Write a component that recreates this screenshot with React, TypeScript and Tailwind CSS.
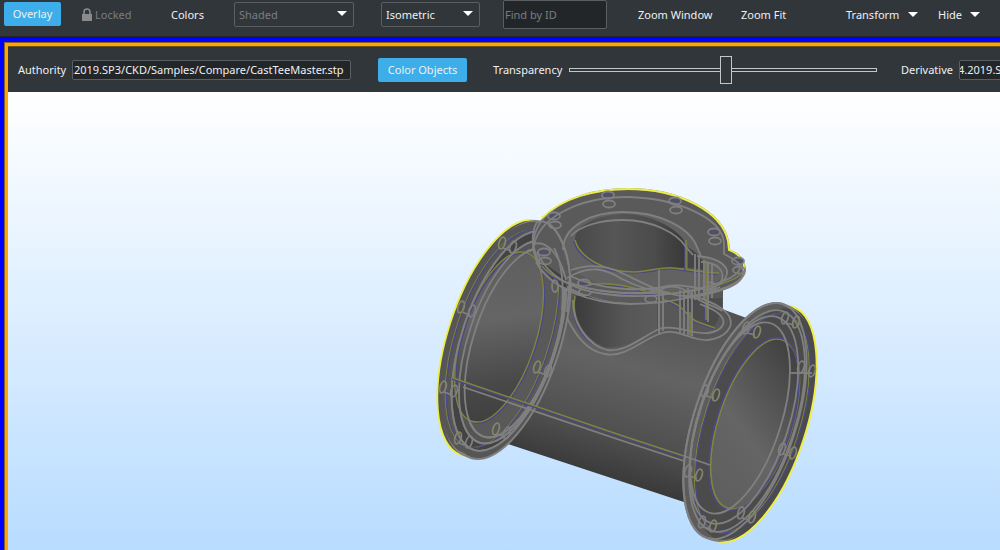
import React, { useState } from 'react';

interface RingProps {
    cx: number;
    cy: number;
    scale: number;
    stroke?: string;
    fill?: string;
    width?: number;
}

const GRAY = '#808080';
const OLIVE = '#83833a';
const BLUE = '#48488a';
const YELLOW = '#eeee44';

// Every circle of the run pipe projects to the same tilted ellipse
const Ring: React.FC<RingProps> = ({ cx, cy, scale, stroke = GRAY, fill = 'none', width = 1.8 }) => (
    <ellipse
        cx={cx}
        cy={cy}
        rx={51 * scale}
        ry={123 * scale}
        transform={`rotate(18 ${cx} ${cy})`}
        stroke={stroke}
        fill={fill}
        strokeWidth={width}
    />
);

const leftHoles = [
    [502, 243], [461, 307], [443, 387], [458, 438], [496, 429], [537, 367],
];

const rightHoles = [
    [796, 322], [757, 332], [716, 395], [699, 475], [713, 526], [752, 517], [793, 453], [812, 371],
];

const topHoles = [
    [608, 195], [675, 201], [714, 232], [738, 261], [584, 283], [544, 252], [554, 216],
];

const grayEdges = [
    // top flange
    'M534 246 C538 220 575 197 628 197 C675 198 722 217 724 243 L724 254 C733 259 744 264 743 274 C741 287 715 293 690 298',
    'M537 252 C546 274 570 290 605 294 C640 299 680 295 712 285 C732 279 743 272 739 264',
    'M536 262 C550 288 590 304 630 304 C655 304 680 300 694 296',
    'M563 250 C563 227 590 212 623 212 C660 212 690 228 697 247 L701 256',
    'M571 236 C580 226 600 220 623 220 C652 220 677 233 686 247 L693 255',
    'M571 270 C588 264 605 265 622 273 C643 283 664 295 684 296 C695 297 710 292 720 287',
    'M567 278 C590 264 606 269 622 279 C640 288 655 292 670 293',
    'M568 282 C590 291 625 295 655 292',
    'M570 276 C600 290 640 292 668 286 C680 284 694 287 706 290 C722 286 730 276 726 268 C721 260 708 257 697 256',
    'M701 262 C718 262 726 272 721 282',
    'M657 292 C668 284 680 285 692 295 C704 305 714 305 722 311',
    // saddle where the branch meets the run
    'M567 318 C575 334 586 351 605 354 C626 358 642 339 662 333 C679 328 690 341 708 340 C725 338 735 327 729 316 C722 306 710 302 700 298',
    'M573 300 C572 322 587 345 607 350 C627 353 643 335 662 328 C680 325 693 335 708 333 C722 331 727 323 721 316 C716 309 706 307 700 304',
    'M659 270 L659 335', 'M663 292 L663 331', 'M680 290 L680 333', 'M684 292 L684 334', 'M688 288 L688 335',
    'M692 290 L692 336', 'M695 254 L695 300', 'M699 256 L699 300', 'M704 260 L704 300', 'M708 262 L708 322', 'M712 264 L712 298',
    'M463 387 L620 440 L684 461',
    'M790 373 L812 373',
    // top flange seen through the left one
    'M537 222 C530 234 533 250 540 264',
    'M540 221 C556 222 568 247 570 276 L567 312',
    'M548 223 C562 234 570 256 571 290',
    'M554 248 C562 262 564 284 562 310',
    'M534 244 C546 240 560 254 566 280',
];

const accentEdges = [
    'M575 240 C579 256 602 272 634 272 C650 272 662 266 674 268 C690 270 707 273 719 273',
    'M686 240 L686 269',
    'M453 378 L620 435 L684 456',
    'M542 266 C560 288 610 296 657 293 C690 296 735 282 742 273',
    'M585 286 C602 281 625 285 645 291',
    'M575 296 C571 318 582 335 594 343',
    'M664 300 C684 303 686 318 698 322 L715 328',
    'M659 298 L659 334',
    'M706 262 L706 320',
    'M690 312 L690 336',
];

const CastTee = () => (
    <svg viewBox="430 180 400 370" width="400" height="370" fill="none" role="img" aria-label="CastTeeMaster">
        <defs>
            <linearGradient id="run" gradientUnits="userSpaceOnUse" x1="640" y1="290" x2="586" y2="474">
                <stop offset="0" stopColor="#525252" />
                <stop offset="0.4" stopColor="#636363" />
                <stop offset="0.75" stopColor="#505050" />
                <stop offset="1" stopColor="#393939" />
            </linearGradient>
            <linearGradient id="boreLeft" x1="0.3" y1="0" x2="0.5" y2="1">
                <stop offset="0" stopColor="#5e5e5e" />
                <stop offset="0.4" stopColor="#656565" />
                <stop offset="0.8" stopColor="#484848" />
                <stop offset="1" stopColor="#404040" />
            </linearGradient>
            <linearGradient id="boreRight" x1="0.7" y1="0" x2="0.4" y2="1">
                <stop offset="0" stopColor="#3e3e3e" />
                <stop offset="0.6" stopColor="#656565" />
                <stop offset="1" stopColor="#5e5e5e" />
            </linearGradient>
            <linearGradient id="branch" x1="0" y1="0" x2="1" y2="0">
                <stop offset="0" stopColor="#494949" />
                <stop offset="0.35" stopColor="#565656" />
                <stop offset="0.7" stopColor="#4c4c4c" />
                <stop offset="1" stopColor="#383838" />
            </linearGradient>
            <linearGradient id="neck" x1="0" y1="0" x2="1" y2="0">
                <stop offset="0" stopColor="#3c3c3c" />
                <stop offset="0.6" stopColor="#565656" />
                <stop offset="1" stopColor="#5c5c5c" />
            </linearGradient>
        </defs>

        {/* run pipe and branch */}
        <path d="M545 250 L722 309 L752 320 L690 504 L505 443 Z" fill="url(#run)" />
        <path d="M570 270 L723 270 L723 312 L729 320 C726 334 712 337 700 334 C680 324 664 329 650 335 C632 343 620 350 605 348 C580 340 572 318 570 290 Z" fill="#585858" />

        {/* left flange */}
        <Ring cx={499} cy={338} scale={1} fill="#565656" stroke={YELLOW} />
        <Ring cx={504} cy={339} scale={1} fill="#565656" />
        <Ring cx={509} cy={341} scale={1} fill="#565656" width={2} />
        <Ring cx={501} cy={338} scale={0.98} fill="#565656" stroke="none" />
        <Ring cx={509} cy={341} scale={0.93} fill="#434343" />
        <Ring cx={512} cy={342} scale={0.86} fill="#545454" />
        <Ring cx={514} cy={343} scale={0.8} fill="#595959" />
        <Ring cx={500} cy={338} scale={0.72} fill="url(#boreLeft)" stroke={BLUE} width={1.6} />
        <Ring cx={499} cy={337} scale={0.72} stroke={OLIVE} width={1.4} />
        <Ring cx={502} cy={339} scale={0.92} stroke={OLIVE} width={1.2} />
        <Ring cx={503} cy={339} scale={0.92} stroke={BLUE} width={1.2} />
        <Ring cx={509} cy={341} scale={0.93} />
        <Ring cx={512} cy={342} scale={0.86} />
        <Ring cx={514} cy={343} scale={0.8} />
        {leftHoles.map(([x, y]) => (
            <g key={`${x}-${y}`} strokeWidth="1.8">
                <ellipse cx={x} cy={y} rx="3" ry="6" transform={`rotate(18 ${x} ${y})`} stroke="#85856c" />
                <ellipse cx={x + 11} cy={y + 4} rx="3" ry="6" transform={`rotate(18 ${x + 11} ${y + 4})`} stroke={GRAY} />
                <path d={`M${x + 1} ${y + 5} l8 3`} stroke={GRAY} />
            </g>
        ))}

        {/* top flange */}
        <path
            d="M533 247 C533 235 538 222 548 214 C565 198 595 189 628 189 C680 189 722 212 728 241 L729 250 C740 254 745 262 745 271 C743 285 715 292 690 297 C670 302 650 304 630 304 C585 303 535 277 533 247 Z"
            fill="#5a5a5a"
            stroke={GRAY}
            strokeWidth="1.8"
        />
        <path d="M542 218 C562 198 595 189 628 189 C680 189 722 212 728 241 L729 250 C740 254 745 262 744 271" stroke={YELLOW} strokeWidth="1.8" />
        <path d="M563 250 C563 227 590 212 623 212 C660 212 697 230 701 256 L725 266 C728 290 680 296 628 291 C588 285 565 268 563 250 Z" fill="#626262" />
        <path d="M575 240 C574 225 600 214 625 214 C655 215 677 229 686 243 L686 268 C665 266 655 274 636 273 C606 272 579 256 575 240 Z" fill="url(#branch)" />
        <path d="M588 296 L575 296 C572 318 585 340 605 347 C625 350 640 335 659 331 L659 302 C630 306 605 303 588 296 Z" fill="url(#neck)" />
        <path d="M688 247 L695 252 L706 264 L706 270 L688 268 Z" fill="#454545" />
        <path d="M664 300 L722 298 L722 310 L714 328 L698 322 C688 318 684 303 664 300 Z" fill="#4c4c4c" />
        <path d="M540 264 C548 278 560 286 567 288 L565 278 L545 264 Z" fill="#404040" />
        {topHoles.map(([x, y]) => (
            <g key={`${x}-${y}`} strokeWidth="1.8">
                <ellipse cx={x} cy={y} rx="6" ry="3.5" stroke={GRAY} fill="#505068" />
                <ellipse cx={x + 1} cy={y + 9} rx="6" ry="3.5" stroke={GRAY} />
            </g>
        ))}
        <ellipse cx="651" cy="299" rx="6" ry="3.5" stroke={GRAY} strokeWidth="1.8" />
        <ellipse cx="710" cy="286" rx="6" ry="3.5" stroke={GRAY} strokeWidth="1.8" />
        <ellipse cx="555" cy="286" rx="3" ry="6" stroke={GRAY} strokeWidth="1.8" />
        {accentEdges.map(d => (
            <g key={d}>
                <path d={d} stroke={BLUE} strokeWidth="1.6" transform="translate(-1 1)" />
                <path d={d} stroke={OLIVE} strokeWidth="1.5" />
            </g>
        ))}
        {grayEdges.map(d => (
            <path key={d} d={d} stroke={GRAY} strokeWidth="1.8" />
        ))}

        {/* right flange */}
        <Ring cx={755} cy={424} scale={1} fill="#4b4b4b" stroke={YELLOW} width={2} />
        <Ring cx={750} cy={423} scale={1} fill="#5c5c5c" />
        <Ring cx={745} cy={421} scale={1} fill="#5c5c5c" width={2} />
        <Ring cx={754} cy={424} scale={0.98} fill="#4b4b4b" stroke="none" />
        <Ring cx={755} cy={424} scale={0.72} fill="url(#boreRight)" stroke={OLIVE} width={1.8} />
        <Ring cx={754} cy={424} scale={0.73} stroke={BLUE} width={1.6} />
        <Ring cx={752} cy={423} scale={0.93} stroke={OLIVE} width={1.4} />
        <Ring cx={753} cy={423} scale={0.93} stroke={BLUE} width={1.4} />
        <Ring cx={745} cy={421} scale={1} />
        <Ring cx={747} cy={421} scale={0.94} />
        <Ring cx={744} cy={420} scale={0.88} />
        <Ring cx={740} cy={418} scale={0.81} />
        <path d="M684 456 L710 465" stroke={GRAY} strokeWidth="1.8" />
        <path d="M790 373 L812 373" stroke={GRAY} strokeWidth="1.8" />
        {rightHoles.map(([x, y]) => (
            <g key={`${x}-${y}`} strokeWidth="1.8">
                <ellipse cx={x - 11} cy={y - 4} rx="3" ry="6" transform={`rotate(18 ${x - 11} ${y - 4})`} stroke={GRAY} />
                <ellipse cx={x} cy={y} rx="3" ry="6" transform={`rotate(18 ${x} ${y})`} stroke="#85856c" />
                <path d={`M${x - 10} ${y + 1} l8 2`} stroke={GRAY} />
            </g>
        ))}
    </svg>
);

const Arrow = ({ className = '' }: { className?: string }) => (
    <svg viewBox="0 0 10 5" className={`w-2.5 h-[5px] fill-white pointer-events-none ${className}`} aria-hidden="true">
        <path d="M0 0 H10 L5 5 Z" />
    </svg>
);

const fieldClass = 'border border-[#5b5f62] bg-[#232629] rounded-xs outline-none';
const activeClass = 'h-6 shrink-0 rounded-xs bg-[#3daee9] text-center';

export default function App() {
    const [transparency, setTransparency] = useState(51);
    const [authority, setAuthority] = useState('.2019.SP3/CKD/Samples/Compare/CastTeeMaster.stp');
    const [derivative, setDerivative] = useState('4.2019.SP3/CKD/Samples/Compare/CastTeeDerivative.stp');

    return (
        <div className="h-screen flex flex-col overflow-hidden bg-[#31363b] text-[#eff0f1] text-[11px] leading-4 font-['Noto_Sans',sans-serif] whitespace-nowrap">
            {/* Main toolbar */}
            <header className="h-[37px] shrink-0 flex items-start pl-1 border-b border-[#22252c]">
                <button className={`${activeClass} w-[57px] mt-0.5`}>Overlay</button>
                <button disabled className="h-[29px] w-[52px] ml-5 shrink-0 flex items-center gap-0.5 text-[#7a7d80]">
                    <svg viewBox="0 0 12 14" className="w-3 h-3.5 shrink-0" aria-hidden="true">
                        <path d="M3 7 V4 a3 3 0 0 1 6 0 V7" fill="none" stroke="#898b8d" strokeWidth="1.6" />
                        <rect x="1" y="6" width="10" height="7" fill="#898b8d" />
                    </svg>
                    Locked
                </button>
                <label htmlFor="colors" className="h-[29px] w-[63px] ml-[38px] shrink-0 flex items-center">Colors</label>
                <div className="relative w-[120px] h-[25px] mt-0.5 shrink-0">
                    <select id="colors" disabled className="appearance-none w-full h-full pl-1 border border-[#5b5f62] rounded-xs text-[#7a7d80] opacity-100">
                        <option>Shaded</option>
                    </select>
                    <Arrow className="absolute right-[7px] top-[9px]" />
                </div>
                <div className="relative w-[99px] h-[25px] mt-0.5 ml-[27px] shrink-0">
                    <select aria-label="View" className="appearance-none w-full h-full pl-1 border border-[#5b5f62] rounded-xs bg-[#31363b]">
                        <option>Isometric</option>
                    </select>
                    <Arrow className="absolute right-[7px] top-[9px]" />
                </div>
                <input
                    type="text"
                    aria-label="Find by ID"
                    placeholder="Find by ID"
                    className={`${fieldClass} w-[104px] h-[29px] ml-[23px] px-px shrink-0 placeholder:text-[#7a7d80]`}
                />
                <button className="h-[29px] w-[76px] ml-[31px] shrink-0 text-left">Zoom Window</button>
                <button className="h-[29px] w-12 ml-[27px] shrink-0 text-left">Zoom Fit</button>
                <button className="h-[29px] w-[72px] ml-[57px] shrink-0 flex items-center justify-between">
                    Transform <Arrow />
                </button>
                <button className="h-[29px] w-[42px] ml-5 shrink-0 flex items-center justify-between">
                    Hide <Arrow />
                </button>
            </header>

            {/* Overlay viewer */}
            <main className="flex-1 min-h-0 border-t-[5px] border-l-4 border-[#0000ff] flex">
                <div className="flex-1 min-w-0 border-t border-l border-[#8a6420] flex">
                    <div className="flex-1 min-w-0 border-t-3 border-l-3 border-[#ffa500] flex flex-col">
                        <div className="h-[46px] shrink-0 flex items-center pl-2.5 border-t border-[#6b5020]">
                            <label htmlFor="authority" className="w-[54px] shrink-0">Authority</label>
                            <input
                                id="authority"
                                type="text"
                                value={authority}
                                onChange={e => setAuthority(e.target.value)}
                                className={`${fieldClass} w-[279px] h-5 shrink-0 -indent-0.5`}
                            />
                            <button className={`${activeClass} w-[89px] ml-[27px]`}>Color Objects</button>
                            <label htmlFor="transparency" className="w-[76px] ml-[26px] shrink-0">Transparency</label>
                            <input
                                id="transparency"
                                type="range"
                                min={0}
                                max={100}
                                value={transparency}
                                onChange={e => setTransparency(Number(e.target.value))}
                                className="appearance-none flex-1 min-w-0 h-7 bg-transparent [&::-webkit-slider-runnable-track]:h-1 [&::-webkit-slider-runnable-track]:border [&::-webkit-slider-runnable-track]:border-[#c4c6c7] [&::-webkit-slider-thumb]:appearance-none [&::-webkit-slider-thumb]:w-3 [&::-webkit-slider-thumb]:h-7 [&::-webkit-slider-thumb]:-mt-[13px] [&::-webkit-slider-thumb]:bg-[#31363b] [&::-webkit-slider-thumb]:border [&::-webkit-slider-thumb]:border-[#c4c6c7]"
                            />
                            <div className="w-[99px] ml-6 shrink-0 flex items-center overflow-hidden">
                                <label htmlFor="derivative" className="w-[58px] shrink-0">Derivative</label>
                                <input
                                    id="derivative"
                                    type="text"
                                    value={derivative}
                                    onChange={e => setDerivative(e.target.value)}
                                    className={`${fieldClass} w-[279px] h-5 shrink-0 -indent-0.5`}
                                />
                            </div>
                        </div>
                        <div className="flex-1 min-h-0 flex justify-end items-start pt-[88px] pr-[170px] bg-linear-to-b from-white to-[#b8dcff]">
                            <CastTee />
                        </div>
                    </div>
                </div>
            </main>
        </div>
    );
}
